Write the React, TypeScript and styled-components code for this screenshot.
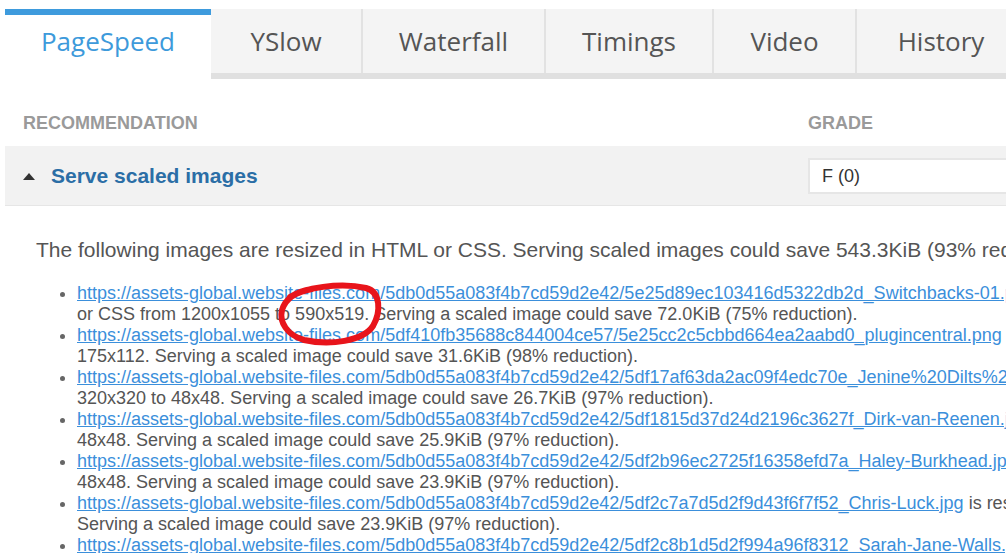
import React from "react";
import styled, { createGlobalStyle } from "styled-components";

const GlobalStyle = createGlobalStyle`
  html, body {
    margin: 0;
    padding: 0;
    background: #ffffff;
    overflow: hidden;
  }
  body {
    font-family: "Liberation Sans", Arial, sans-serif;
  }
`;

const Page = styled.div`
  position: relative;
  width: 1300px;
  min-height: 553px;
  padding-top: 9px;
`;

const TabBar = styled.nav`
  display: flex;
  margin-left: 5px;
`;

const Tab = styled.div<{ $active?: boolean; $w: number }>`
  box-sizing: border-box;
  width: ${(p) => p.$w}px;
  height: 70px;
  font-family: "Open Sans", "Noto Sans", sans-serif;
  font-size: 26px;
  text-align: center;
  color: ${(p) => (p.$active ? "#3d9adb" : "#555555")};
  background: ${(p) => (p.$active ? "#ffffff" : "#f4f4f4")};
  border-top: ${(p) => (p.$active ? "6px solid #3e9bdd" : "0")};
  border-bottom: ${(p) => (p.$active ? "0" : "6px solid #e0e0e0")};
`;

const TabLabel = styled.div<{ $active?: boolean; $divider?: boolean }>`
  box-sizing: border-box;
  height: ${(p) => (p.$active ? "52px" : "64px")};
  line-height: ${(p) => (p.$active ? "52px" : "64px")};
  border-left: ${(p) => (p.$divider ? "2px solid #e2e2e2" : "0")};
`;

const Results = styled.section`
  margin-left: 5px;
`;

const HeaderRow = styled.div`
  display: grid;
  grid-template-columns: 803px 1fr;
  height: 67px;
  box-sizing: border-box;
  padding-top: 34px;
`;

const HeaderCell = styled.div<{ $indent?: number }>`
  padding-left: ${(p) => p.$indent ?? 0}px;
  font-size: 18px;
  line-height: 20px;
  font-weight: bold;
  color: #9a9a9a;
`;

const RuleRow = styled.div`
  display: grid;
  grid-template-columns: 803px 1fr;
  align-items: center;
  height: 60px;
  box-sizing: border-box;
  background: #f2f2f2;
  border-bottom: 1px solid #e6e6e6;
`;

const RuleTitle = styled.div`
  display: flex;
  align-items: center;
  gap: 16px;
  padding-left: 18px;
  font-size: 21px;
  font-weight: bold;
  color: #2b6ea6;
`;

const Caret = styled.span`
  width: 0;
  height: 0;
  border-left: 6px solid transparent;
  border-right: 6px solid transparent;
  border-bottom: 7px solid #333333;
  margin-top: 1px;
`;

const GradeBox = styled.div`
  box-sizing: border-box;
  width: 300px;
  height: 36px;
  background: #ffffff;
  border: 2px solid #e6e6e6;
  padding-left: 12px;
  font-size: 18px;
  line-height: 32px;
  color: #333333;
`;

const Details = styled.div`
  padding: 0 0 0 31px;
  color: #555555;
`;

const Summary = styled.p`
  margin: 32px 0 21px;
  font-size: 21px;
  line-height: 24px;
  white-space: nowrap;
`;

const ImageList = styled.ul`
  margin: 0;
  padding-left: 41px;
  list-style: disc;
  font-size: 18px;
  line-height: 21px;
`;

const Item = styled.li`
  &::marker {
    color: #666666;
  }
`;

const Line = styled.span`
  display: block;
  white-space: nowrap;
`;

const Url = styled.a`
  color: #3b8fdb;
  text-decoration: underline;
`;

const Annotation = styled.svg`
  position: absolute;
  left: 0;
  top: 0;
  pointer-events: none;
`;

const tabs = [
  { label: "PageSpeed", w: 206 },
  { label: "YSlow", w: 150 },
  { label: "Waterfall", w: 183 },
  { label: "Timings", w: 168 },
  { label: "Video", w: 143 },
  { label: "History", w: 170 },
];

const base = "https://assets-global.website-files.com/5db0d55a083f4b7cd59d2e42/";

const items = [
  {
    url: base + "5e25d89ec103416d5322db2d_Switchbacks-01.png",
    rest: " is resized in HTML",
    second: "or CSS from 1200x1055 to 590x519. Serving a scaled image could save 72.0KiB (75% reduction).",
  },
  {
    url: "https://assets-global.website-files.com/5df410fb35688c844004ce57/5e25cc2c5cbbd664ea2aabd0_plugincentral.png",
    rest: " is resized in HTML or CSS from 200x128 to",
    second: "175x112. Serving a scaled image could save 31.6KiB (98% reduction).",
  },
  {
    url: base + "5df17af63da2ac09f4edc70e_Jenine%20Dilts%20Headshot.jpg",
    rest: " is resized in HTML or CSS from",
    second: "320x320 to 48x48. Serving a scaled image could save 26.7KiB (97% reduction).",
  },
  {
    url: base + "5df1815d37d24d2196c3627f_Dirk-van-Reenen.jpg",
    rest: " is resized in HTML or CSS from 320x320 to",
    second: "48x48. Serving a scaled image could save 25.9KiB (97% reduction).",
  },
  {
    url: base + "5df2b96ec2725f16358efd7a_Haley-Burkhead.jpg",
    rest: " is resized in HTML or CSS from 320x320 to",
    second: "48x48. Serving a scaled image could save 23.9KiB (97% reduction).",
  },
  {
    url: base + "5df2c7a7d5d2f9d43f6f7f52_Chris-Luck.jpg",
    rest: " is resized in HTML or CSS from 320x320 to 48x48.",
    second: "Serving a scaled image could save 23.9KiB (97% reduction).",
  },
  {
    url: base + "5df2c8b1d5d2f994a96f8312_Sarah-Jane-Walls.jpg",
    rest: " is resized in HTML or CSS from 320x320 to",
    second: "48x48. Serving a scaled image could save 23.9KiB (97% reduction).",
  },
];

export default function App() {
  return (
    <Page>
      <GlobalStyle />
      <TabBar>
        {tabs.map((t, i) => (
          <Tab key={t.label} $active={i === 0} $w={t.w}>
            <TabLabel $active={i === 0} $divider={i > 1}>
              {t.label}
            </TabLabel>
          </Tab>
        ))}
      </TabBar>
      <Results>
        <HeaderRow>
          <HeaderCell $indent={18}>RECOMMENDATION</HeaderCell>
          <HeaderCell>GRADE</HeaderCell>
        </HeaderRow>
        <RuleRow>
          <RuleTitle>
            <Caret />
            <span>Serve scaled images</span>
          </RuleTitle>
          <GradeBox>F (0)</GradeBox>
        </RuleRow>
        <Details>
          <Summary>
            The following images are resized in HTML or CSS. Serving scaled images could save 543.3KiB (93% reduction).
          </Summary>
          <ImageList>
            {items.map((it) => (
              <Item key={it.url}>
                <Line>
                  <Url href="#">{it.url}</Url>
                  {it.rest}
                </Line>
                <Line>{it.second}</Line>
              </Item>
            ))}
          </ImageList>
        </Details>
      </Results>
      <Annotation width="1006" height="553" viewBox="0 0 1006 553">
        <path
          d="M 290 297 C 303 288, 340 282, 366 288 C 381 292, 381 312, 373 326 C 363 341, 330 346, 304 340 C 287 335, 279 322, 282 310 C 285 300, 294 292, 312 289"
          fill="none"
          stroke="#e8141b"
          strokeWidth="6"
          strokeLinecap="round"
          strokeLinejoin="round"
        />
      </Annotation>
    </Page>
  );
}
